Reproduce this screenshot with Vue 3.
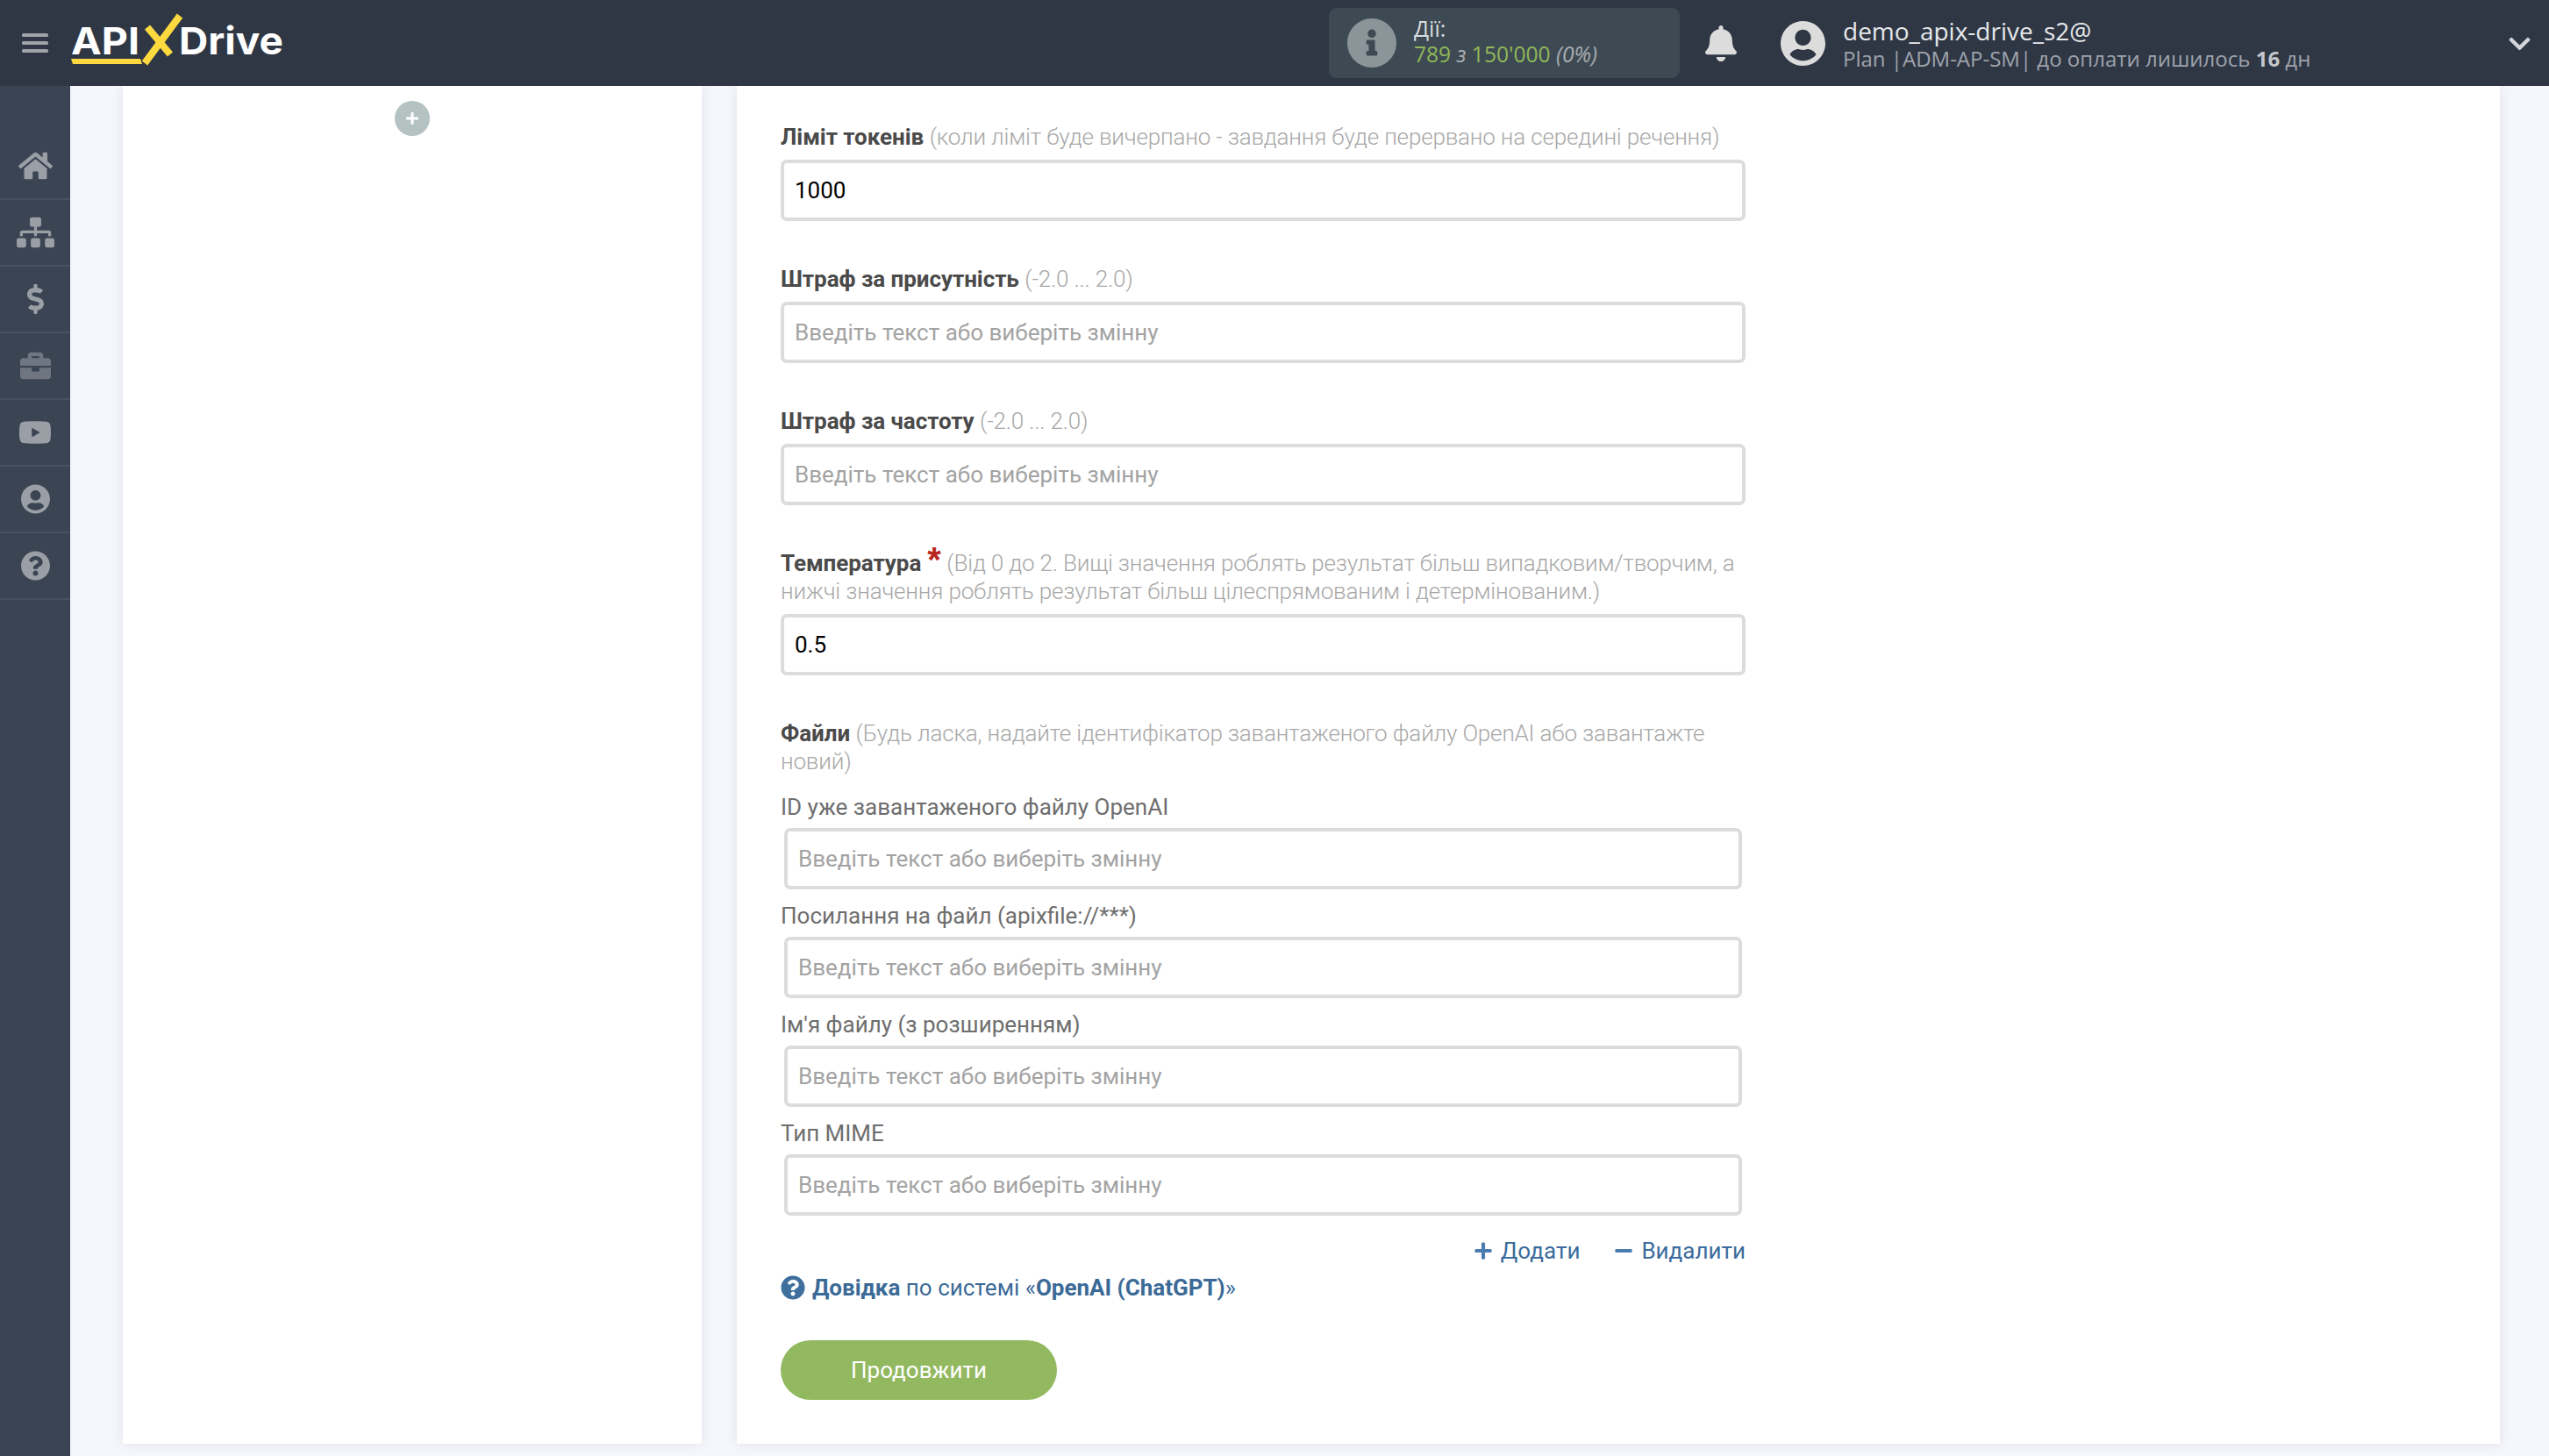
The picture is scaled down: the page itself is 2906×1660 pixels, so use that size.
<template>
  <div class="page">
    <header class="topbar">
      <svg class="bars" viewBox="0 0 30 22"><rect y="0" width="30" height="4" rx="1.5" /><rect y="9" width="30" height="4" rx="1.5" /><rect y="18" width="30" height="4" rx="1.5" /></svg>
      <svg class="logo" viewBox="0 0 250 70" width="250" height="70">
        <text x="0" y="48" textLength="78" lengthAdjust="spacingAndGlyphs" class="logo-word">API</text>
        <text x="123" y="48" textLength="119" lengthAdjust="spacingAndGlyphs" class="logo-word">Drive</text>
        <line x1="124" y1="4" x2="84" y2="58" class="logo-x" />
        <line x1="87" y1="17" x2="113" y2="48" class="logo-x" />
        <polygon points="0,53 79,53 81,59 2,59" fill="#fbd93f" />
      </svg>

      <div class="usage">
        <svg class="usage-icon" viewBox="8 8 496 496"><path :d="icons.info" /></svg>
        <div class="usage-text">
          <div class="usage-title">Дії:</div>
          <div class="usage-count"><span class="green">789</span> <i>з</i> <span class="green">150'000</span> <i>(0%)</i></div>
        </div>
      </div>
      <svg class="bell" viewBox="0 0 448 512"><path :d="icons.bell" /></svg>
      <svg class="avatar" viewBox="0 8 496 496"><path :d="icons.user" /></svg>
      <div class="account">
        <div class="account-name">demo_apix-drive_s2@</div>
        <div class="account-plan">Plan |ADM-AP-SM| до оплати лишилось <b>16</b> дн</div>
      </div>
      <svg class="chevron" viewBox="0 0 448 512"><path :d="icons.chevron" /></svg>
    </header>

    <div class="body">
      <nav class="sidebar">
        <div v-for="item in nav" :key="item.name" class="nav-item">
          <svg :class="{ dim: item.dim }" :style="{ width: item.w + 'px' }" :viewBox="item.box"><path :d="item.d" /></svg>
        </div>
      </nav>

      <main class="main">
        <section class="card card-left">
          <div class="add-circle">
            <svg viewBox="0 0 448 512"><path :d="icons.plus" /></svg>
          </div>
        </section>

        <section class="card card-right">
          <div v-for="f in fields" :key="f.title" class="field">
            <div class="label">
              <b>{{ f.title }}</b><span v-if="f.required" class="star">*</span> <span class="hint">{{ f.hint }}</span>
            </div>
            <input class="input" type="text" :value="f.value" placeholder="Введіть текст або виберіть змінну" />
          </div>

          <div class="label files-label">
            <b>Файли</b> <span class="hint">(Будь ласка, надайте ідентифікатор завантаженого файлу OpenAI або завантажте новий)</span>
          </div>
          <div v-for="s in subFields" :key="s" class="sub-field">
            <div class="sub-label">{{ s }}</div>
            <input class="input" type="text" placeholder="Введіть текст або виберіть змінну" />
          </div>

          <div class="actions">
            <a class="action">
              <svg viewBox="0 0 448 512"><path :d="icons.plus" /></svg>Додати
            </a>
            <a class="action">
              <svg viewBox="0 0 448 512"><path :d="icons.minus" /></svg>Видалити
            </a>
          </div>

          <div class="help">
            <svg viewBox="0 0 512 512"><path :d="icons.question" /></svg>
            <span><b>Довідка</b> по системі «<b>OpenAI (ChatGPT)</b>»</span>
          </div>

          <button class="next" type="button">Продовжити</button>
        </section>
      </main>
    </div>
  </div>
</template>

<script setup>
const icons = {
  info: 'M256 8C119.043 8 8 119.083 8 256c0 136.997 111.043 248 248 248s248-111.003 248-248C504 119.083 392.957 8 256 8zm0 110c23.196 0 42 18.804 42 42s-18.804 42-42 42-42-18.804-42-42 18.804-42 42-42zm56 254c0 6.627-5.373 12-12 12h-88c-6.627 0-12-5.373-12-12v-24c0-6.627 5.373-12 12-12h12v-64h-12c-6.627 0-12-5.373-12-12v-24c0-6.627 5.373-12 12-12h64c6.627 0 12 5.373 12 12v100h12c6.627 0 12 5.373 12 12v24z',
  bell: 'M224 512c35.32 0 63.97-28.65 63.97-64H160.03c0 35.35 28.65 64 63.97 64zm215.39-149.71c-19.32-20.76-55.47-51.99-55.47-154.29 0-77.7-54.48-139.9-127.94-155.16V32c0-17.67-14.32-32-31.98-32s-31.98 14.33-31.98 32v20.84C118.56 68.1 64.08 130.3 64.08 208c0 102.3-36.15 133.53-55.47 154.29-6 6.45-8.66 14.16-8.61 21.71.11 16.4 12.98 32 32.1 32h383.8c19.12 0 32-15.6 32.1-32 .05-7.55-2.61-15.27-8.61-21.71z',
  user: 'M248 8C111 8 0 119 0 256s111 248 248 248 248-111 248-248S385 8 248 8zm0 96c48.6 0 88 39.4 88 88s-39.4 88-88 88-88-39.4-88-88 39.4-88 88-88zm0 344c-58.7 0-111.3-26.6-146.5-68.2 18.8-35.4 55.6-59.8 98.5-59.8 2.4 0 4.8.4 7.1 1.1 13 4.2 26.6 6.9 40.9 6.9 14.3 0 28-2.7 40.9-6.9 2.3-.7 4.7-1.1 7.1-1.1 42.9 0 79.7 24.4 98.5 59.8C359.3 421.4 306.7 448 248 448z',
  chevron: 'M207.029 381.476L12.686 187.132c-9.373-9.373-9.373-24.569 0-33.941l22.667-22.667c9.357-9.357 24.522-9.375 33.901-.04L224 284.505l154.745-154.021c9.379-9.335 24.544-9.317 33.901.04l22.667 22.667c9.373 9.373 9.373 24.569 0 33.941L240.971 381.476c-9.373 9.372-24.569 9.372-33.942 0z',
  plus: 'M416 208H272V64c0-17.67-14.33-32-32-32h-32c-17.67 0-32 14.33-32 32v144H32c-17.67 0-32 14.33-32 32v32c0 17.67 14.33 32 32 32h144v144c0 17.67 14.33 32 32 32h32c17.67 0 32-14.33 32-32V304h144c17.67 0 32-14.33 32-32v-32c0-17.67-14.33-32-32-32z',
  minus: 'M416 208H32c-17.67 0-32 14.33-32 32v32c0 17.67 14.33 32 32 32h384c17.67 0 32-14.33 32-32v-32c0-17.67-14.33-32-32-32z',
  question: 'M504 256c0 136.997-111.043 248-248 248S8 392.997 8 256C8 119.083 119.043 8 256 8s248 111.083 248 248zM262.655 90c-54.497 0-89.255 22.957-116.549 63.758-3.536 5.286-2.353 12.415 2.715 16.258l34.699 26.31c5.205 3.947 12.621 3.008 16.665-2.122 17.864-22.658 30.113-35.797 57.303-35.797 20.429 0 45.698 13.148 45.698 32.958 0 14.976-12.363 22.667-32.534 33.976C247.128 238.528 216 254.941 216 296v4c0 6.627 5.373 12 12 12h56c6.627 0 12-5.373 12-12v-1.333c0-28.462 83.186-29.647 83.186-106.667 0-58.002-60.165-102-116.531-102zM256 338c-25.365 0-46 20.635-46 46 0 25.364 20.635 46 46 46s46-20.636 46-46c0-25.365-20.635-46-46-46z',
}

const nav = [
  { name: 'home', w: 39, box: '0 0 576 512', d: 'M280.37 148.26L96 300.11V464a16 16 0 0 0 16 16l112.06-.29a16 16 0 0 0 15.92-16V368a16 16 0 0 1 16-16h64a16 16 0 0 1 16 16v95.64a16 16 0 0 0 16 16.05L464 480a16 16 0 0 0 16-16V300L295.67 148.26a12.19 12.19 0 0 0-15.3 0zM571.6 251.47L488 182.56V44.05a12 12 0 0 0-12-12h-56a12 12 0 0 0-12 12v72.61L318.47 43a48 48 0 0 0-61 0L4.34 251.47a12 12 0 0 0-1.6 16.9l25.5 31A12 12 0 0 0 45.15 301l235.22-193.74a12.19 12.19 0 0 1 15.3 0L530.9 301a12 12 0 0 0 16.9-1.6l25.5-31a12 12 0 0 0-1.7-16.93z' },
  { name: 'sitemap', w: 43, box: '0 0 640 512', d: 'M128 352H32c-17.67 0-32 14.33-32 32v96c0 17.67 14.33 32 32 32h96c17.67 0 32-14.33 32-32v-96c0-17.67-14.33-32-32-32zm-24-80h192v48h48v-48h192v48h48v-57.59c0-21.17-17.23-38.41-38.41-38.41H344v-64h40c17.67 0 32-14.33 32-32V32c0-17.67-14.33-32-32-32H256c-17.67 0-32 14.33-32 32v96c0 17.67 14.33 32 32 32h40v64H94.41C73.23 224 56 241.23 56 262.41V320h48v-48zm264 80h-96c-17.67 0-32 14.33-32 32v96c0 17.67 14.33 32 32 32h96c17.67 0 32-14.33 32-32v-96c0-17.67-14.33-32-32-32zm240 0h-96c-17.67 0-32 14.33-32 32v96c0 17.67 14.33 32 32 32h96c17.67 0 32-14.33 32-32v-96c0-17.67-14.33-32-32-32z' },
  { name: 'dollar', w: 19, box: '0 0 288 512', d: 'M209.2 233.4l-108-31.6C88.7 198.2 80 186.5 80 173.5c0-16.3 13.2-29.5 29.5-29.5h66.3c12.2 0 24.2 3.7 34.2 10.5 6.1 4.1 14.3 3.1 19.5-2l34.8-34c7.1-6.9 6.1-18.4-1.8-24.5C238 74.8 207.4 64.1 176 64V16c0-8.8-7.2-16-16-16h-32c-8.8 0-16 7.2-16 16v48h-2.5C45.8 64-5.4 118.7.5 183.6c4.2 46.1 39.4 83.6 83.8 96.6l102.5 30c12.5 3.7 21.2 15.3 21.2 28.3 0 16.3-13.2 29.5-29.5 29.5h-66.3C100 368 88 364.3 78 357.5c-6.1-4.1-14.3-3.1-19.5 2l-34.8 34c-7.1 6.9-6.1 18.4 1.8 24.5 24.5 19.2 55.1 29.9 86.5 30v48c0 8.8 7.2 16 16 16h32c8.8 0 16-7.2 16-16v-48.2c46.6-.9 90.3-28.6 105.7-72.7 21.5-61.6-14.6-124.8-72.5-141.7z' },
  { name: 'briefcase', w: 35, dim: true, box: '0 0 512 512', d: 'M320 336c0 8.84-7.16 16-16 16h-96c-8.84 0-16-7.16-16-16v-48H0v144c0 25.6 22.4 48 48 48h416c25.6 0 48-22.4 48-48V288H320v48zm144-208h-80V80c0-25.6-22.4-48-48-48H176c-25.6 0-48 22.4-48 48v48H48c-25.6 0-48 22.4-48 48v80h512v-80c0-25.6-22.4-48-48-48zm-144 0H192V96h128v32z' },
  { name: 'video', w: 38, box: '0 0 576 512', d: 'M549.655 124.083c-6.281-23.65-24.787-42.276-48.284-48.597C458.781 64 288 64 288 64S117.22 64 74.629 75.486c-23.497 6.322-42.003 24.947-48.284 48.597-11.412 42.867-11.412 132.305-11.412 132.305s0 89.438 11.412 132.305c6.281 23.65 24.787 41.5 48.284 47.821C117.22 448 288 448 288 448s170.78 0 213.371-11.486c23.497-6.321 42.003-24.171 48.284-47.821 11.412-42.867 11.412-132.305 11.412-132.305s0-89.438-11.412-132.305zm-317.51 213.508V175.185l142.739 81.205-142.739 81.201z' },
  { name: 'user', w: 33, box: '0 8 496 496', d: icons.user },
  { name: 'help', w: 33, box: '8 8 496 496', d: icons.question },
]

const fields = [
  { title: 'Ліміт токенів', hint: '(коли ліміт буде вичерпано - завдання буде перервано на середині речення)', value: '1000' },
  { title: 'Штраф за присутність', hint: '(-2.0 ... 2.0)', value: '' },
  { title: 'Штраф за частоту', hint: '(-2.0 ... 2.0)', value: '' },
  { title: 'Температура', required: true, hint: '(Від 0 до 2. Вищі значення роблять результат більш випадковим/творчим, а нижчі значення роблять результат більш цілеспрямованим і детермінованим.)', value: '0.5' },
]

const subFields = ['ID уже завантаженого файлу OpenAI', 'Посилання на файл (apixfile://***)', "Ім'я файлу (з розширенням)", 'Тип MIME']
</script>

<style scoped>
.page {
  width: 2906px;
  height: 1660px;
  overflow: hidden;
  display: flex;
  flex-direction: column;
  font-family: Roboto, "Liberation Sans", sans-serif;
  font-size: 26px;
  background: #f5f7fc;
}

.topbar {
  height: 98px;
  flex: none;
  display: flex;
  align-items: center;
  background: #2f3745;
  position: relative;
  z-index: 2;
  font-family: "Open Sans", sans-serif;
}
.bars {
  width: 30px;
  height: 22px;
  margin-left: 25px;
  fill: #a0a4aa;
}
.logo {
  margin-left: 26px;
  flex: none;
}
.logo-word {
  font-family: Inter, sans-serif;
  font-weight: 700;
  font-size: 43px;
  fill: #fff;
}
.logo-x {
  stroke: #fbd93f;
  stroke-width: 8;
}
.usage {
  margin-left: 1184px;
  width: 400px;
  height: 80px;
  display: flex;
  align-items: center;
  background: #3e4a53;
  border-radius: 9px;
  flex: none;
}
.usage-icon {
  width: 56px;
  height: 56px;
  margin-left: 21px;
  fill: #8b9498;
  flex: none;
}
.usage-text {
  margin-left: 20px;
  margin-bottom: 4px;
  font-size: 25px;
  line-height: 30px;
  color: #d8dcdf;
}
.usage-count {
  color: #a8acb0;
  font-size: 24.6px;
  white-space: nowrap;
}
.green {
  color: #8fb858;
}
.bell {
  width: 36px;
  height: 41px;
  margin-left: 29px;
  fill: #dcdcdc;
  flex: none;
}
.avatar {
  width: 51px;
  height: 51px;
  margin-left: 50px;
  fill: #dcdcdc;
  flex: none;
}
.account {
  margin-left: 20px;
  margin-top: 4px;
  white-space: nowrap;
  color: #9ea3ab;
  font-size: 24px;
  line-height: 31px;
}
.account-name {
  color: #e6e8ea;
  font-size: 28px;
}
.account-plan b {
  color: #c4c7cb;
}
.chevron {
  position: absolute;
  right: 21px;
  top: 36px;
  width: 25px;
  height: 28px;
  fill: #d4d6d9;
}

.body {
  flex: 1;
  display: flex;
  min-height: 0;
}
.sidebar {
  width: 80px;
  flex: none;
  padding-top: 54px;
  background: #3a4453;
}
.nav-item {
  height: 76px;
  box-sizing: border-box;
  border-bottom: 2px solid #475161;
  display: flex;
  align-items: center;
  justify-content: center;
}
.nav-item svg {
  fill: #9a9ea5;
  height: 36px;
}
.nav-item svg.dim {
  fill: #6f7682;
}

.main {
  flex: 1;
  display: flex;
  gap: 40px;
  padding: 0 56px 14px 60px;
  min-width: 0;
}
.card {
  background: #fff;
  box-shadow: 0 0 14px rgba(0, 0, 0, 0.09);
  box-sizing: border-box;
}
.card-left {
  width: 660px;
  flex: none;
  padding-top: 17px;
}
.add-circle {
  width: 40px;
  height: 40px;
  margin: 0 auto;
  border-radius: 50%;
  background: #b5c2c2;
  display: flex;
  align-items: center;
  justify-content: center;
}
.add-circle svg {
  width: 14px;
  height: 16px;
  fill: #fff;
}
.card-right {
  flex: 1;
  padding: 42px 0 0 50px;
}

.field {
  width: 1100px;
  margin-bottom: 50px;
}
.label {
  width: 1100px;
  line-height: 32px;
  margin-bottom: 10px;
}
.label b {
  color: #4a4a4a;
  font-weight: 700;
  letter-spacing: -0.05px;
}
.hint {
  font-weight: 300;
  color: #a8a8a8;
  letter-spacing: -0.17px;
}
.star {
  color: #b9271c;
  font-family: "Liberation Sans", sans-serif;
  font-size: 40px;
  font-weight: 700;
  line-height: 0;
  margin-left: 7px;
  position: relative;
  top: 1px;
}
.input {
  display: block;
  width: 100%;
  height: 70px;
  box-sizing: border-box;
  border: 4px solid #dcdcdc;
  border-radius: 7px;
  padding: 0 12px;
  outline: none;
  background: #fff;
  font-family: inherit;
  font-size: 26px;
  color: #000;
}
.input::placeholder {
  color: #a3a3a3;
  opacity: 1;
}
.files-label {
  margin-bottom: 20px;
}
.sub-field {
  width: 1100px;
  margin-bottom: 14px;
}
.sub-label {
  line-height: 32px;
  margin-bottom: 8px;
  color: #6e6e6e;
}
.sub-field .input {
  width: 1092px;
  margin-left: 4px;
}

.actions {
  width: 1100px;
  display: flex;
  justify-content: flex-end;
  gap: 40px;
  margin-top: 24px;
  line-height: 32px;
}
.action {
  display: flex;
  align-items: center;
  gap: 10px;
  color: #3b6c9c;
}
.action svg {
  width: 20px;
  height: 22px;
  fill: #4a7cb0;
}
.help {
  display: flex;
  align-items: center;
  gap: 8px;
  margin-top: 10px;
  line-height: 32px;
  color: #3b6a97;
}
.help svg {
  width: 28px;
  height: 28px;
  fill: #3f6f9d;
}
.next {
  display: block;
  width: 315px;
  height: 68px;
  margin-top: 44px;
  border: none;
  border-radius: 34px;
  background: #92b860;
  color: #fff;
  font-family: inherit;
  font-size: 26px;
  font-weight: 400;
}
</style>

<style>
html,
body {
  margin: 0;
  padding: 0;
}
</style>
